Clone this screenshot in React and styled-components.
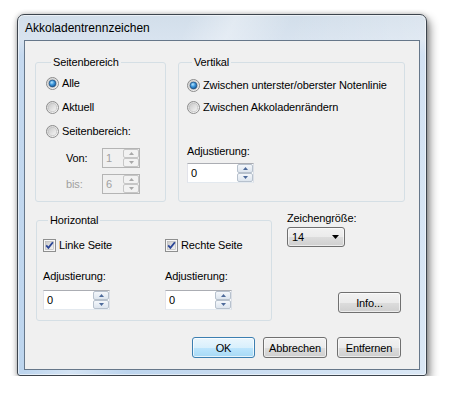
import React, { useId } from 'react';
import styled, { createGlobalStyle } from 'styled-components';

const Global = createGlobalStyle`
  html, body { margin: 0; padding: 0; background: #fff; }
  body { font-family: "Liberation Sans", Arial, sans-serif; font-size: 11px; color: #000; }
  * { box-sizing: border-box; }
`;

const Window = styled.div`
  margin: 14px 0 0 17px;
  width: 410px;
  height: 362px;
  border: 1px solid #3c444d;
  border-radius: 7px 7px 3px 3px;
  background:
    linear-gradient(115deg, rgba(255,255,255,0) 0%, rgba(255,255,255,0) 30%, rgba(255,255,255,.35) 38%, rgba(255,255,255,0) 48%, rgba(255,255,255,.25) 75%, rgba(255,255,255,.45) 100%),
    linear-gradient(to bottom, #d2deea 0px, #d8e3ef 24px, #c5d9ef 40px, #bdd5ee 100%);
  box-shadow: inset 0 0 0 1px rgba(255,255,255,.55), 3px 5px 10px rgba(0,0,0,.45), 0 0 5px rgba(0,0,0,.25);
  display: flex;
  flex-direction: column;
  padding: 0 6px 5px 6px;
`;

const TitleBar = styled.div`
  height: 25px;
  display: flex;
  align-items: center;
  padding-left: 1px;
  font-family: "Segoe UI", "Liberation Sans", Arial, sans-serif;
  font-size: 12px;
  color: #000;
`;

const Client = styled.div`
  height: 330px;
  border: 1px solid #66778a;
  background: #f0f0f0;
  display: flex;
  flex-direction: column;
  padding: 15px 14px 0 10px;
  letter-spacing: -0.12px;
`;

const Row = styled.div`
  display: flex;
  align-items: flex-start;
  gap: ${p => p.$gap || 0}px;
  margin-top: ${p => p.$mt || 0}px;
`;

const Group = styled.fieldset`
  margin: ${p => p.$mt || 0}px 0 0 ${p => p.$ml || 0}px;
  padding: 0 0 0 ${p => p.$pl}px;
  border: 1px solid #d5dfe5;
  border-radius: 3px;
  width: ${p => p.$w}px;
  height: ${p => p.$h}px;
  min-width: 0;
  flex: none;
`;

const Legend = styled.legend`
  margin-left: 5px;
  padding: 0 2px;
  font-size: 11px;
  line-height: 13px;
  color: #000;
`;

const OptionList = styled.div`
  display: flex;
  flex-direction: column;
  margin-top: ${p => p.$mt}px;
`;

const OptionRow = styled.label`
  display: flex;
  align-items: center;
  gap: 3px;
  height: ${p => p.$h}px;
  line-height: 13px;
  white-space: nowrap;
`;

const Caption = styled.div`
  line-height: 13px;
  margin-top: ${p => p.$mt || 0}px;
  color: ${p => (p.$disabled ? '#a0a0a0' : '#000')};
  white-space: nowrap;
`;

const SpinGrid = styled.div`
  display: grid;
  grid-template-columns: 36px 38px;
  row-gap: 6px;
  align-items: center;
  margin: 5px 0 0 20px;
`;

const SpinBox = styled.div`
  display: flex;
  width: ${p => p.$w}px;
  height: 20px;
  margin-top: ${p => p.$mt || 0}px;
  border: 1px solid;
  border-color: ${p => (p.$disabled ? '#b4b4b4' : '#abadb3 #dbdfe6 #e3e9ef #e2e3ea')};
  background: ${p => (p.$disabled ? '#f0f0f0' : '#fff')};
  color: ${p => (p.$disabled ? '#a0a0a0' : '#000')};
`;

const SpinValue = styled.div`
  flex: 1;
  display: flex;
  align-items: center;
  padding-left: 3px;
  line-height: 13px;
`;

const SpinButtons = styled.div`
  width: 16px;
  display: flex;
  flex-direction: column;
`;

const SpinBtn = styled.div`
  flex: 1;
  display: flex;
  align-items: center;
  justify-content: center;
  border: 1px solid ${p => (p.$disabled ? '#c6c6c6' : '#b7c1cd')};
  border-radius: 2px;
  background: ${p => (p.$disabled ? '#f2f2f2' : 'linear-gradient(#f4f7fb, #dde5ee)')};
`;

const HGrid = styled.div`
  display: grid;
  grid-template-columns: 122px 100px;
  margin-top: 9px;
`;

const Col = styled.div`
  display: flex;
  flex-direction: column;
`;

const SideCol = styled.div`
  display: flex;
  flex-direction: column;
  width: 114px;
  margin-left: 15px;
`;

const Combo = styled.div`
  width: 58px;
  height: 20px;
  margin-top: 2px;
  border: 1px solid #707070;
  border-radius: 3px;
  background: linear-gradient(#f2f2f2 0%, #ebebeb 50%, #dddddd 50%, #cfcfcf 100%);
  box-shadow: inset 0 0 0 1px rgba(255,255,255,.6);
  display: flex;
  align-items: center;
  justify-content: space-between;
  padding: 0 5px 0 4px;
  line-height: 13px;
`;

const Button = styled.button`
  width: ${p => p.$w || 63}px;
  height: 21px;
  margin: ${p => p.$m || 0};
  padding: 0;
  font-family: "Liberation Sans", Arial, sans-serif;
  font-size: 11px;
  letter-spacing: -0.12px;
  color: #000;
  border: 1px solid ${p => (p.$default ? '#3c7fb1' : '#707070')};
  border-radius: 3px;
  background: ${p =>
    p.$default
      ? 'linear-gradient(#eaf6fd 0%, #d9f0fc 50%, #bee6fd 50%, #a7d9f5 100%)'
      : 'linear-gradient(#f2f2f2 0%, #ebebeb 50%, #dddddd 50%, #cfcfcf 100%)'};
  box-shadow: inset 0 0 0 1px ${p => (p.$default ? 'rgba(255,255,255,.7)' : 'rgba(255,255,255,.6)')};
  flex: none;
`;

const ButtonRow = styled.div`
  display: flex;
  justify-content: flex-end;
  margin-top: 16px;
  padding-right: 4px;
`;

function Radio({ checked }) {
  const id = useId().replace(/:/g, '');
  return (
    <svg width="13" height="13" viewBox="0 0 13 13" style={{ flex: 'none' }}>
      <defs>
        <linearGradient id={`o${id}`} x1="0" y1="0" x2="1" y2="1">
          <stop offset="0" stopColor="#d2d2d2" />
          <stop offset="1" stopColor="#fcfcfc" />
        </linearGradient>
        <linearGradient id={`i${id}`} x1="0" y1="0" x2="1" y2="1">
          <stop offset="0" stopColor="#c8c8c8" />
          <stop offset="1" stopColor="#f7f7f7" />
        </linearGradient>
        <radialGradient id={`d${id}`} cx="0.4" cy="0.35" r="0.75">
          <stop offset="0" stopColor="#b6e6ff" />
          <stop offset="0.45" stopColor="#3b96dc" />
          <stop offset="1" stopColor="#0f4a85" />
        </radialGradient>
      </defs>
      <circle cx="6.5" cy="6.5" r="6" fill={`url(#o${id})`} stroke="#8c8c8c" />
      <circle cx="6.5" cy="6.5" r="4.1" fill={`url(#i${id})`} stroke="#b9b9b9" strokeWidth="0.6" />
      {checked && <circle cx="6.5" cy="6.5" r="3.4" fill={`url(#d${id})`} stroke="#1e4e7e" strokeWidth="0.7" />}
    </svg>
  );
}

function Check() {
  const id = useId().replace(/:/g, '');
  return (
    <svg width="13" height="13" viewBox="0 0 13 13" style={{ flex: 'none' }}>
      <defs>
        <linearGradient id={`c${id}`} x1="0" y1="0" x2="1" y2="1">
          <stop offset="0" stopColor="#c9c9c9" />
          <stop offset="1" stopColor="#f4f4f4" />
        </linearGradient>
      </defs>
      <rect x="0.5" y="0.5" width="12" height="12" fill="#f6f6f6" stroke="#8e8f8f" />
      <rect x="2.5" y="2.5" width="8" height="8" fill={`url(#c${id})`} stroke="#b3b3b3" strokeWidth="0.6" />
      <path d="M3.2 6.4 L5.4 8.9 L9.9 3.3" fill="none" stroke="#2a4596" strokeWidth="1.8" />
    </svg>
  );
}

function Arrow({ up, disabled }) {
  return (
    <svg width="5" height="3" viewBox="0 0 5 3">
      <path d={up ? 'M0 3 L2.5 0 L5 3 Z' : 'M0 0 L5 0 L2.5 3 Z'} fill={disabled ? '#a8a8a8' : '#4d6a9a'} />
    </svg>
  );
}

function Spinner({ value, w, disabled, mt }) {
  return (
    <SpinBox $w={w} $disabled={disabled} $mt={mt}>
      <SpinValue>{value}</SpinValue>
      <SpinButtons>
        <SpinBtn $disabled={disabled}><Arrow up disabled={disabled} /></SpinBtn>
        <SpinBtn $disabled={disabled}><Arrow disabled={disabled} /></SpinBtn>
      </SpinButtons>
    </SpinBox>
  );
}

export default function App() {
  return (
    <>
      <Global />
      <Window>
        <TitleBar>Akkoladentrennzeichen</TitleBar>
        <Client>
          <Row $gap={12}>
            <Group $w={131} $h={146} $pl={10}>
              <Legend>Seitenbereich</Legend>
              <OptionList $mt={2}>
                <OptionRow $h={24}><Radio checked />Alle</OptionRow>
                <OptionRow $h={24}><Radio />Aktuell</OptionRow>
                <OptionRow $h={24}><Radio />Seitenbereich:</OptionRow>
              </OptionList>
              <SpinGrid>
                <Caption>Von:</Caption>
                <Spinner value="1" w={38} disabled />
                <Caption $disabled>bis:</Caption>
                <Spinner value="6" w={38} disabled />
              </SpinGrid>
            </Group>
            <Group $w={227} $h={146} $pl={8}>
              <Legend>Vertikal</Legend>
              <OptionList $mt={5}>
                <OptionRow $h={22}><Radio checked />Zwischen unterster/oberster Notenlinie</OptionRow>
                <OptionRow $h={22}><Radio />Zwischen Akkoladenrändern</OptionRow>
              </OptionList>
              <Caption $mt={27}>Adjustierung:</Caption>
              <Spinner value="0" w={67} mt={5} />
            </Group>
          </Row>
          <Row $mt={10}>
            <Group $w={236} $h={107} $pl={6} $mt={2} $ml={1}>
              <Legend>Horizontal</Legend>
              <HGrid>
                <Col>
                  <OptionRow $h={18}><Check />Linke Seite</OptionRow>
                  <Caption $mt={16}>Adjustierung:</Caption>
                  <Spinner value="0" w={67} mt={7} />
                </Col>
                <Col>
                  <OptionRow $h={18}><Check />Rechte Seite</OptionRow>
                  <Caption $mt={16}>Adjustierung:</Caption>
                  <Spinner value="0" w={67} mt={7} />
                </Col>
              </HGrid>
            </Group>
            <SideCol>
              <Caption>Zeichengröße:</Caption>
              <Combo>
                <span>14</span>
                <svg width="7" height="4" viewBox="0 0 7 4"><path d="M0 0 L7 0 L3.5 4 Z" fill="#000" /></svg>
              </Combo>
              <Button $m="45px 0 0 51px">Info...</Button>
            </SideCol>
          </Row>
          <ButtonRow>
            <Button $default>OK</Button>
            <Button $w={64} $m="0 0 0 8px">Abbrechen</Button>
            <Button $w={64} $m="0 0 0 10px">Entfernen</Button>
          </ButtonRow>
        </Client>
      </Window>
    </>
  );
}
